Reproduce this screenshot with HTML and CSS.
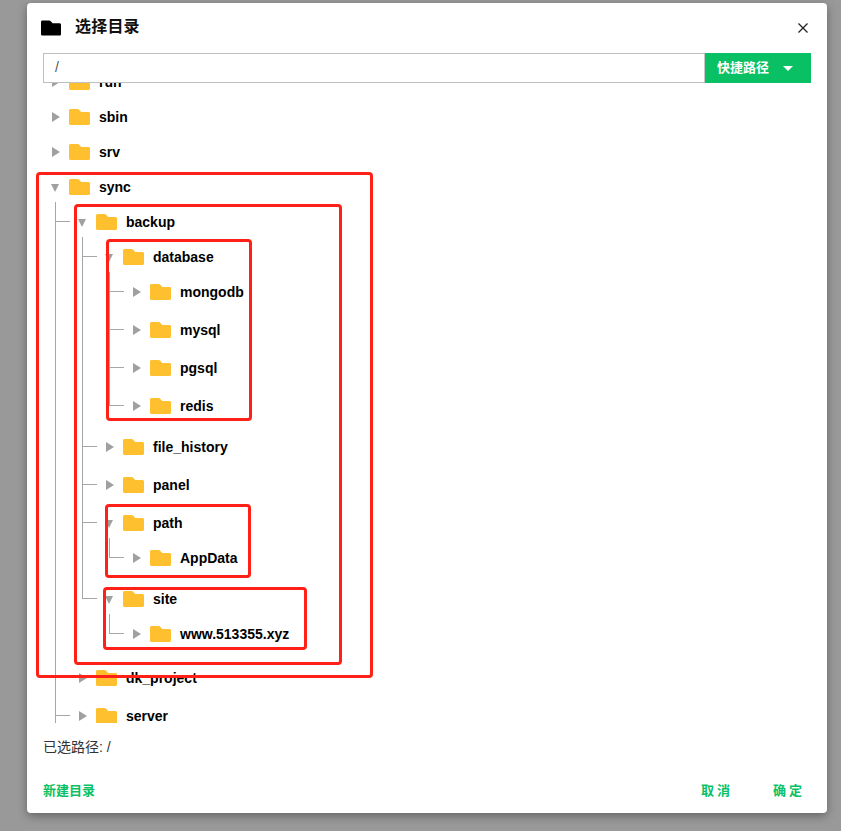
FILE: index.html
```
<!DOCTYPE html>
<html lang="zh-CN">
<head>
<meta charset="utf-8">
<title>选择目录</title>
<link rel="stylesheet" href="styles.css">
</head>
<body>
<svg class="defs" width="0" height="0" aria-hidden="true">
  <symbol id="folder" viewBox="0 0 21 16">
    <path d="M1.5 0H8.6C9.2 0 9.6.2 10 .6L12.2 3H19.5C20.3 3 21 3.7 21 4.5V14.5C21 15.3 20.3 16 19.5 16H1.5C.7 16 0 15.3 0 14.5V1.5C0 .7.7 0 1.5 0Z"/>
  </symbol>
</svg>
<div class="dialog">
  <header class="head">
    <svg class="head-icon"><use href="#folder"/></svg>
    <h1 class="title">选择目录</h1>
    <svg class="close" viewBox="0 0 10 10"><path d="M.5.5 9.5 9.5M9.5.5 .5 9.5"/></svg>
  </header>
  <div class="path-bar">
    <div class="path-input">/</div>
    <div class="path-btn"><span class="btn-label">快捷路径</span><i class="caret"></i></div>
  </div>
  <div class="tree-view">
    <ul class="tree">
      <li><div class="row"><i class="arr"></i><svg class="fd"><use href="#folder"/></svg><span>run</span></div></li>
      <li><div class="row"><i class="arr"></i><svg class="fd"><use href="#folder"/></svg><span>sbin</span></div></li>
      <li><div class="row"><i class="arr"></i><svg class="fd"><use href="#folder"/></svg><span>srv</span></div></li>
      <li>
        <div class="row"><i class="arr open"></i><svg class="fd"><use href="#folder"/></svg><span>sync</span></div>
        <ul class="sub">
          <li>
            <div class="row"><i class="arr open"></i><svg class="fd"><use href="#folder"/></svg><span>backup</span></div>
            <ul class="sub">
              <li>
                <div class="row"><i class="arr open"></i><svg class="fd"><use href="#folder"/></svg><span>database</span></div>
                <ul class="sub">
                  <li><div class="row"><i class="arr"></i><svg class="fd"><use href="#folder"/></svg><span>mongodb</span></div></li>
                  <li><div class="row"><i class="arr"></i><svg class="fd"><use href="#folder"/></svg><span>mysql</span></div></li>
                  <li><div class="row"><i class="arr"></i><svg class="fd"><use href="#folder"/></svg><span>pgsql</span></div></li>
                  <li class="last"><div class="row"><i class="arr"></i><svg class="fd"><use href="#folder"/></svg><span>redis</span></div></li>
                </ul>
              </li>
              <li><div class="row"><i class="arr"></i><svg class="fd"><use href="#folder"/></svg><span>file_history</span></div></li>
              <li><div class="row"><i class="arr"></i><svg class="fd"><use href="#folder"/></svg><span>panel</span></div></li>
              <li>
                <div class="row"><i class="arr open"></i><svg class="fd"><use href="#folder"/></svg><span>path</span></div>
                <ul class="sub">
                  <li class="last"><div class="row"><i class="arr"></i><svg class="fd"><use href="#folder"/></svg><span>AppData</span></div></li>
                </ul>
              </li>
              <li class="last">
                <div class="row"><i class="arr open"></i><svg class="fd"><use href="#folder"/></svg><span>site</span></div>
                <ul class="sub">
                  <li class="last"><div class="row"><i class="arr"></i><svg class="fd"><use href="#folder"/></svg><span>www.513355.xyz</span></div></li>
                </ul>
              </li>
            </ul>
          </li>
          <li><div class="row"><i class="arr"></i><svg class="fd"><use href="#folder"/></svg><span>dk_project</span></div></li>
          <li><div class="row"><i class="arr"></i><svg class="fd"><use href="#folder"/></svg><span>server</span></div></li>
        </ul>
      </li>
    </ul>
  </div>
  <div class="selected">已选路径: /</div>
  <footer class="foot">
    <a class="link">新建目录</a>
    <div class="actions">
      <a class="link spaced">取消</a>
      <a class="link spaced">确定</a>
    </div>
  </footer>
</div>
<div class="mark m-sync"></div>
<div class="mark m-backup"></div>
<div class="mark m-database"></div>
<div class="mark m-path"></div>
<div class="mark m-site"></div>
</body>
</html>
```
FILE: styles.css
```
* { box-sizing: border-box; }
html, body { margin: 0; height: 100%; }
body {
  position: relative;
  background: #999;
  padding: 3px 14px 0 27px;
  height: 831px;
  overflow: hidden;
  font-family: "Liberation Sans", "Noto Sans CJK SC", sans-serif;
  color: #000;
}
.defs { position: absolute; }
.dialog {
  width: 800px;
  height: 810px;
  background: #fff;
  border-radius: 4px;
  padding: 0 16px;
  box-shadow: 0 3px 10px rgba(0, 0, 0, .35);
  display: flex;
  flex-direction: column;
}
.head {
  height: 50px;
  display: flex;
  align-items: center;
  padding-bottom: 1px;
}
.head-icon { width: 20px; height: 16px; margin-left: -2px; fill: #000; flex: none; }
.title { margin: -2px 0 0 14px; font-size: 16px; font-weight: 700; line-height: 22px; letter-spacing: .2px; color: #111; }
.close { width: 10px; height: 10px; margin-left: auto; margin-right: 3px; stroke: #222; stroke-width: 1.3; fill: none; flex: none; }
.path-bar { display: flex; height: 30px; flex: none; }
.path-input {
  flex: 1;
  border: 1px solid #c0c0c0;
  border-right-color: #c8c8c8;
  padding-left: 11px;
  font-size: 14px;
  line-height: 27px;
  color: #555;
}
.path-btn {
  width: 106px;
  background: #09c164;
  color: #fff;
  font-size: 13px;
  font-weight: 700;
  display: flex;
  align-items: center;
  padding-left: 12px;
}
.btn-label { margin-top: -3px; }
.caret {
  margin-left: 14px;
  border-style: solid;
  border-width: 5px 5px 0;
  border-color: #fff transparent transparent;
}
.tree-view { height: 640px; overflow: hidden; flex: none; }
.tree, .sub { list-style: none; margin: 0; }
.tree { padding: 0 0 0 5px; margin-top: -19px; }
.sub { padding-left: 27px; }
.sub > li { position: relative; padding-bottom: 3px; }
.sub > li::before {
  content: "";
  position: absolute;
  left: -20px;
  top: -2px;
  bottom: 0;
  border-left: 1px solid #a6a6a6;
}
.sub > li.last::before { bottom: auto; height: 19px; }
.sub > li::after {
  content: "";
  position: absolute;
  left: -20px;
  top: 17px;
  width: 15px;
  border-top: 1px solid #a6a6a6;
}
.row {
  height: 35px;
  display: flex;
  align-items: center;
  font-size: 14px;
  font-weight: 700;
  color: #000;
}
.arr {
  width: 16px;
  height: 35px;
  flex: none;
  position: relative;
}
.arr::before {
  content: "";
  position: absolute;
  left: 4px;
  top: 13px;
  border-style: solid;
  border-width: 5px 0 5px 8px;
  border-color: transparent transparent transparent #a0a0a0;
}
.arr.open::before {
  left: 3px;
  top: 15px;
  border-width: 8px 4.5px 0;
  border-color: #a0a0a0 transparent transparent;
}
.fd { width: 21px; height: 16px; margin-left: 5px; margin-right: 9px; fill: #fec02e; flex: none; }
.selected { margin-top: 14px; font-size: 14px; line-height: 20px; color: #333; flex: none; }
.foot {
  margin-top: 22px;
  display: flex;
  justify-content: space-between;
  align-items: center;
  height: 20px;
  font-size: 13px;
  font-weight: 700;
}
.link { color: #09c164; }
.actions { display: flex; gap: 43px; padding-right: 9px; }
.spaced { letter-spacing: 3px; margin-right: -3px; }
.mark {
  position: absolute;
  border: 3px solid #ff2018;
  border-radius: 4px;
  pointer-events: none;
}
.m-sync { left: 36px; top: 172px; width: 337px; height: 506px; }
.m-backup { left: 74px; top: 204px; width: 268px; height: 461px; }
.m-database { left: 106px; top: 239px; width: 146px; height: 182px; }
.m-path { left: 105px; top: 504px; width: 146px; height: 74px; }
.m-site { left: 103px; top: 587px; width: 204px; height: 63px; }
```
